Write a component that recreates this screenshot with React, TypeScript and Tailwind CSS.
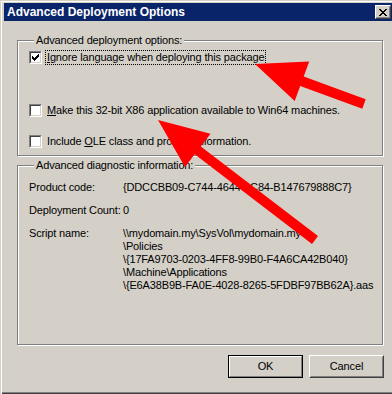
import React from 'react';

// pixel-style classic check glyph (7x7)
const CheckGlyph = () => (
  <svg width="7" height="7" viewBox="0 0 7 7" shapeRendering="crispEdges">
    <path d="M0 2h1v3H0z M1 3h1v3H1z M2 4h1v3H2z M3 3h1v3H3z M4 2h1v3H4z M5 1h1v3H5z M6 0h1v3H6z" fill="#000" />
  </svg>
);

const CloseGlyph = () => (
  <svg width="8" height="7" viewBox="0 0 8 7" shapeRendering="crispEdges">
    <path
      d="M0 0h2v1H0z M6 0h2v1H6z M1 1h2v1H1z M5 1h2v1H5z M2 2h4v1H2z M3 3h2v1H3z M2 4h4v1H2z M1 5h2v1H1z M5 5h2v1H5z M0 6h2v1H0z M6 6h2v1H6z"
      fill="#000"
    />
  </svg>
);

const CheckBox: React.FC<{ checked?: boolean }> = ({ checked }) => (
  <span className="flex w-[13px] h-[13px] shrink-0 border border-t-[#808080] border-l-[#808080] border-b-white border-r-white">
    <span className="flex flex-1 items-center justify-center bg-white border border-t-[#404040] border-l-[#404040] border-b-[#d4d0c8] border-r-[#d4d0c8]">
      {checked && <CheckGlyph />}
    </span>
  </span>
);

const CheckRow: React.FC<{ checked?: boolean; focused?: boolean; className?: string; children: React.ReactNode }> = ({
  checked,
  focused,
  className,
  children,
}) => (
  <div className={`flex items-center h-[15px] ${className ?? ''}`}>
    <CheckBox checked={checked} />
    <span
      className={`ml-[3px] px-[1px] border whitespace-nowrap ${focused ? 'border-dotted border-black' : 'border-transparent'}`}
    >
      {children}
    </span>
  </div>
);

// polygon for a thick arrow, tip first
function arrowPoints(tip: [number, number], tail: [number, number], headLen = 50, headHalf = 21, shaftHalf = 5) {
  const dx = tip[0] - tail[0];
  const dy = tip[1] - tail[1];
  const len = Math.hypot(dx, dy);
  const ux = dx / len;
  const uy = dy / len;
  const nx = -uy;
  const ny = ux;
  const bx = tip[0] - ux * headLen;
  const by = tip[1] - uy * headLen;
  const pts = [
    [tip[0], tip[1]],
    [bx + nx * headHalf, by + ny * headHalf],
    [bx + nx * shaftHalf, by + ny * shaftHalf],
    [tail[0] + nx * shaftHalf, tail[1] + ny * shaftHalf],
    [tail[0] - nx * shaftHalf, tail[1] - ny * shaftHalf],
    [bx - nx * shaftHalf, by - ny * shaftHalf],
    [bx - nx * headHalf, by - ny * headHalf],
  ];
  return pts.map((p) => `${p[0].toFixed(1)},${p[1].toFixed(1)}`).join(' ');
}

const scriptLines = [
  '\\\\mydomain.my\\SysVol\\mydomain.my',
  '\\Policies',
  '\\{17FA9703-0203-4FF8-99B0-F4A6CA42B040}',
  '\\Machine\\Applications',
  '\\{E6A38B9B-FA0E-4028-8265-5FDBF97BB62A}.aas',
];

const App: React.FC = () => {
  return (
    <div className="relative w-[392px] h-[394px] overflow-hidden bg-[#d4d0c8] text-black text-[11px] leading-[13px] tracking-[-0.15px] font-['Liberation_Sans',Arial,sans-serif]">
      {/* window frame */}
      <div className="flex flex-col h-full pl-[4px] pt-[3px] shadow-[inset_1px_1px_0_#d4d0c8,inset_2px_2px_0_#ffffff,inset_0_-1px_0_#404040,inset_0_-2px_0_#808080]">
        {/* title bar */}
        <div className="flex items-center h-[18px] bg-[#0a246a] pl-[3px] pr-[1px]">
          <span className="flex-1 text-white font-bold text-[12px] tracking-normal whitespace-nowrap">Advanced Deployment Options</span>
          <button className="flex items-center justify-center w-[16px] h-[14px] bg-[#d4d0c8] border border-t-white border-l-white border-b-[#404040] border-r-[#404040]">
            <span className="flex items-center justify-center w-full h-full border border-t-[#d4d0c8] border-l-[#d4d0c8] border-b-[#808080] border-r-[#808080]">
              <CloseGlyph />
            </span>
          </button>
        </div>

        <div className="flex flex-col pl-[13px]">
          {/* group 1 */}
          <fieldset className="mt-[13px] w-[366px] h-[122px] border border-[#808080] shadow-[inset_1px_1px_0_#ffffff,1px_1px_0_#ffffff] pl-[11px]">
            <legend className="ml-[5px] px-[2px] bg-[#d4d0c8] leading-[13px]">Advanced deployment options:</legend>
            <CheckRow checked focused className="mt-[3px]">
              <span className="underline">I</span>gnore language when deploying this package
            </CheckRow>
            <CheckRow className="mt-[38px]">
              <span className="underline">M</span>ake this 32-bit X86 application available to Win64 machines.
            </CheckRow>
            <CheckRow className="mt-[16px]">
              Include <span className="underline">O</span>LE class and product information.
            </CheckRow>
          </fieldset>

          {/* group 2 */}
          <fieldset className="mt-[3px] w-[366px] h-[186px] border border-[#808080] shadow-[inset_1px_1px_0_#ffffff,1px_1px_0_#ffffff] pl-[11px]">
            <legend className="ml-[5px] px-[2px] bg-[#d4d0c8] leading-[13px]">Advanced diagnostic information:</legend>
            <div className="flex mt-[9px]">
              <span className="w-[94px] shrink-0 whitespace-nowrap">Product code:</span>
              <span className="whitespace-nowrap">{'{DDCCBB09-C744-4644-9C84-B147679888C7}'}</span>
            </div>
            <div className="flex mt-[10px]">
              <span className="w-[94px] shrink-0 whitespace-nowrap">Deployment Count:</span>
              <span>0</span>
            </div>
            <div className="flex mt-[10px]">
              <span className="w-[94px] shrink-0 whitespace-nowrap">Script name:</span>
              <div className="flex flex-col">
                {scriptLines.map((l) => (
                  <span key={l} className="whitespace-pre">{l}</span>
                ))}
              </div>
            </div>
          </fieldset>
        </div>

        {/* buttons */}
        <div className="flex justify-end gap-[6px] mt-[10px] pr-[8px]">
          <button className="w-[75px] h-[23px] bg-[#d4d0c8] border border-black">
            <span className="flex items-center justify-center w-full h-full border border-t-white border-l-white border-b-[#808080] border-r-[#808080]">
              OK
            </span>
          </button>
          <button className="w-[75px] h-[23px] bg-[#d4d0c8] border border-t-white border-l-white border-b-[#404040] border-r-[#404040]">
            <span className="flex items-center justify-center w-full h-full border border-t-[#d4d0c8] border-l-[#d4d0c8] border-b-[#808080] border-r-[#808080]">
              Cancel
            </span>
          </button>
        </div>
      </div>

      {/* red annotation arrows */}
      <svg className="absolute inset-0 pointer-events-none" width="392" height="394" viewBox="0 0 392 394">
        <polygon points={arrowPoints([255, 64], [364, 104])} fill="#ff0000" />
        <polygon points={arrowPoints([158, 120], [315, 240])} fill="#ff0000" />
      </svg>
    </div>
  );
};

export default App;
